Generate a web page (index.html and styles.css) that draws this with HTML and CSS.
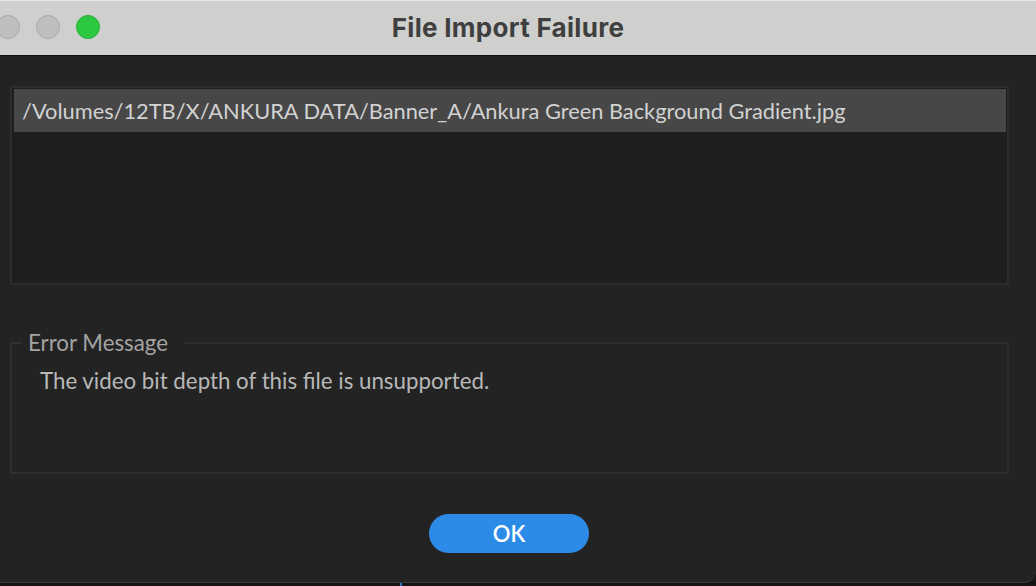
FILE: index.html
```html
<!DOCTYPE html>
<html lang="en">
<head>
<meta charset="utf-8">
<title>File Import Failure</title>
<link rel="stylesheet" href="styles.css">
</head>
<body>
<div class="window">
  <div class="titlebar">
    <div class="lights">
      <span class="light gray"></span>
      <span class="light gray"></span>
      <span class="light green"></span>
    </div>
    <div class="title">File Import Failure</div>
    <div class="spacer"></div>
  </div>
  <div class="content">
    <div class="filelist">
      <div class="row selected">/Volumes/12TB/X/ANKURA DATA/Banner_A/Ankura Green Background Gradient.jpg</div>
    </div>
    <fieldset class="errorbox">
      <legend>Error Message</legend>
      <p class="message">The video bit depth of this file is unsupported.</p>
    </fieldset>
    <div class="actions">
      <button class="ok" type="button">OK</button>
    </div>
  </div>
</div>
<div class="desk"><span class="tick"></span></div>
</body>
</html>
```
FILE: styles.css
```css
* { box-sizing: border-box; }
html, body {
  margin: 0;
  padding: 0;
  width: 1036px;
  height: 586px;
  overflow: hidden;
  background: #141414;
}
body {
  display: flex;
  flex-direction: column;
  font-family: "Lato", "Open Sans", sans-serif;
}
.window {
  margin-left: -18px;
  width: 1054px;
  height: 583px;
  display: flex;
  flex-direction: column;
  background: #232323;
  border-bottom-right-radius: 12px;
  border-bottom: 1px solid #3a3a3a;
  overflow: hidden;
}
.titlebar {
  height: 56px;
  flex: none;
  display: grid;
  grid-template-columns: 1fr auto 1fr;
  align-items: center;
  background: #cfcfcd;
  border-top: 1px solid #e6e6e4;
  border-bottom: 1px solid #111;
}
.lights {
  display: flex;
  gap: 16px;
  padding-left: 14px;
  padding-bottom: 2px;
}
.light {
  width: 24px;
  height: 24px;
  border-radius: 50%;
}
.light.gray {
  background: #bebebd;
  border: 1px solid #a9a9a8;
}
.light.green {
  background: #2cc840;
  border: 1px solid #25ae37;
}
.title {
  font-family: "Inter", "Liberation Sans", sans-serif;
  font-weight: 700;
  font-size: 26px;
  letter-spacing: 0.3px;
  color: #3f3f3f;
  padding-bottom: 2px;
  padding-right: 2px;
}
.content {
  flex: 1;
  display: flex;
  flex-direction: column;
  padding: 30px 27px 0 28px;
}
.filelist {
  height: 199px;
  background: #1e1e1e;
  border: 2px solid #2d2d2d;
  padding: 1px 1px 0 2px;
}
.row {
  height: 43px;
  display: flex;
  align-items: center;
  padding-left: 8px;
  padding-bottom: 1px;
  font-size: 21.8px;
  color: #d2d2d2;
  white-space: nowrap;
}
.row.selected {
  background: #474747;
}
.errorbox {
  margin: 44px 0 0 0;
  padding: 0 0 0 28px;
  height: 145px;
  border: 2px solid #2e2e2e;
}
.errorbox legend {
  margin-left: -18px;
  padding: 0 16px 0 6px;
  font-size: 22.3px;
  color: #a3a3a3;
  line-height: 28px;
}
.message {
  margin: 10px 0 0 0;
  font-size: 22.3px;
  color: #b8b8b8;
  line-height: 28px;
}
.actions {
  display: flex;
  justify-content: center;
  padding-top: 40px;
  padding-right: 1px;
}
.ok {
  width: 160px;
  height: 39px;
  border: none;
  border-radius: 20px;
  background: #2d8be8;
  color: #ffffff;
  font-family: "Lato", sans-serif;
  font-size: 22px;
  font-weight: 600;
  padding: 0;
}
.desk {
  flex: 1;
  position: relative;
}
.tick {
  position: absolute;
  left: 400px;
  top: 0;
  width: 2px;
  height: 3px;
  background: #2d6fc8;
}
```
